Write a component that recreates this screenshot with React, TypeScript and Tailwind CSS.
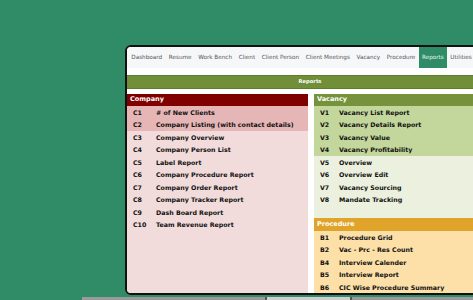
import React from "react";

const navItems = ["Dashboard", "Resume", "Work Bench", "Client", "Client Person", "Client Meetings", "Vacancy", "Procedure", "Reports", "Utilities"];

const company = [
    ["C1", "# of New Clients"],
    ["C2", "Company Listing (with contact details)"],
    ["C3", "Company Overview"],
    ["C4", "Company Person List"],
    ["C5", "Label Report"],
    ["C6", "Company Procedure Report"],
    ["C7", "Company Order Report"],
    ["C8", "Company Tracker Report"],
    ["C9", "Dash Board Report"],
    ["C10", "Team Revenue Report"],
];

const vacancy = [
    ["V1", "Vacancy List Report"],
    ["V2", "Vacancy Details Report"],
    ["V3", "Vacancy Value"],
    ["V4", "Vacancy Profitability"],
    ["V5", "Overview"],
    ["V6", "Overview Edit"],
    ["V7", "Vacancy Sourcing"],
    ["V8", "Mandate Tracking"],
];

const procedure = [
    ["B1", "Procedure Grid"],
    ["B2", "Vac - Prc - Res Count"],
    ["B4", "Interview Calender"],
    ["B5", "Interview Report"],
    ["B6", "CIC Wise Procedure Summary"],
];

const Row = ({ code, label, bg, codeW }: { code: string; label: string; bg: string; codeW: string }) => (
    <div className={`flex h-[12.5px] items-center pl-[6px] text-[6.3px] font-bold text-[#111] ${bg}`}>
        <span className={`flex-none ${codeW}`}>{code}</span>
        <span className="whitespace-nowrap">{label}</span>
    </div>
);

export default function App() {
    return (
        <div className="relative flex h-[300px] w-[473px] flex-col overflow-hidden bg-[#2f8c66]" style={{ fontFamily: "'DejaVu Sans', Verdana, sans-serif" }}>
            <div className="flex-none pl-[125px] pt-[45px]">
                <div className="flex h-[250px] w-[370px] flex-col overflow-hidden rounded-l-[6px] border-2 border-[#111] bg-white">
                    {/* top navigation */}
                    <div className="flex h-[21px] flex-none items-stretch bg-[#f6f7f9] pl-[1px] text-[5.7px] text-[#555]">
                        {navItems.map((item) => (
                            <div
                                key={item}
                                className={`flex items-center whitespace-nowrap px-[3.3px] ${item === "Reports" ? "bg-[#2f8c66] text-[#e6f5ee]" : ""}`}
                            >
                                {item}
                            </div>
                        ))}
                    </div>
                    <div className="h-[7px] flex-none bg-white" />
                    <div className="flex h-[14px] flex-none items-center justify-center border-y border-[#5f7d2c] bg-[#708f38] text-[5.2px] font-bold text-white">
                        Reports
                    </div>
                    <div className="h-[5px] flex-none bg-white" />

                    {/* report columns */}
                    <div className="flex flex-1 gap-[6px]">
                        <div className="flex w-[181px] flex-none flex-col bg-[#f2dcdb]">
                            <div className="flex h-[12px] items-center bg-[#800000] pl-[3px] text-[6.5px] font-bold text-white">Company</div>
                            {company.map(([c, l], i) => (
                                <Row key={c} code={c} label={l} codeW="w-[23px]" bg={i < 2 ? "bg-[#e6b6b6]" : ""} />
                            ))}
                        </div>
                        <div className="flex flex-1 flex-col">
                            <div className="flex h-[12px] items-center bg-[#76923c] pl-[3px] text-[6.5px] font-bold text-white">Vacancy</div>
                            {vacancy.map(([c, l], i) => (
                                <Row key={c} code={c} label={l} codeW="w-[19px]" bg={i < 4 ? "bg-[#c3d69b]" : "bg-[#ebf1de]"} />
                            ))}
                            <div className="h-[12px] bg-[#ebf1de]" />
                            <div className="flex h-[13px] items-center bg-[#dfa429] pl-[3px] text-[6.5px] font-bold text-white">Procedure</div>
                            <div className="flex flex-1 flex-col bg-[#fddfa8]">
                                {procedure.map(([c, l]) => (
                                    <Row key={c} code={c} label={l} codeW="w-[19px]" bg="" />
                                ))}
                            </div>
                        </div>
                    </div>
                </div>
            </div>

            {/* laptop base */}
            <div className="ml-[82px] mt-[2px] flex h-[3px] flex-none">
                <div className="w-[183px] bg-[#9a9a9a]" />
                <div className="w-[2px] bg-[#555]" />
                <div className="w-[83px] bg-[#cfcfcf]" />
                <div className="w-[2px] bg-[#555]" />
                <div className="flex-1 bg-[#9a9a9a]" />
            </div>
        </div>
    );
}
